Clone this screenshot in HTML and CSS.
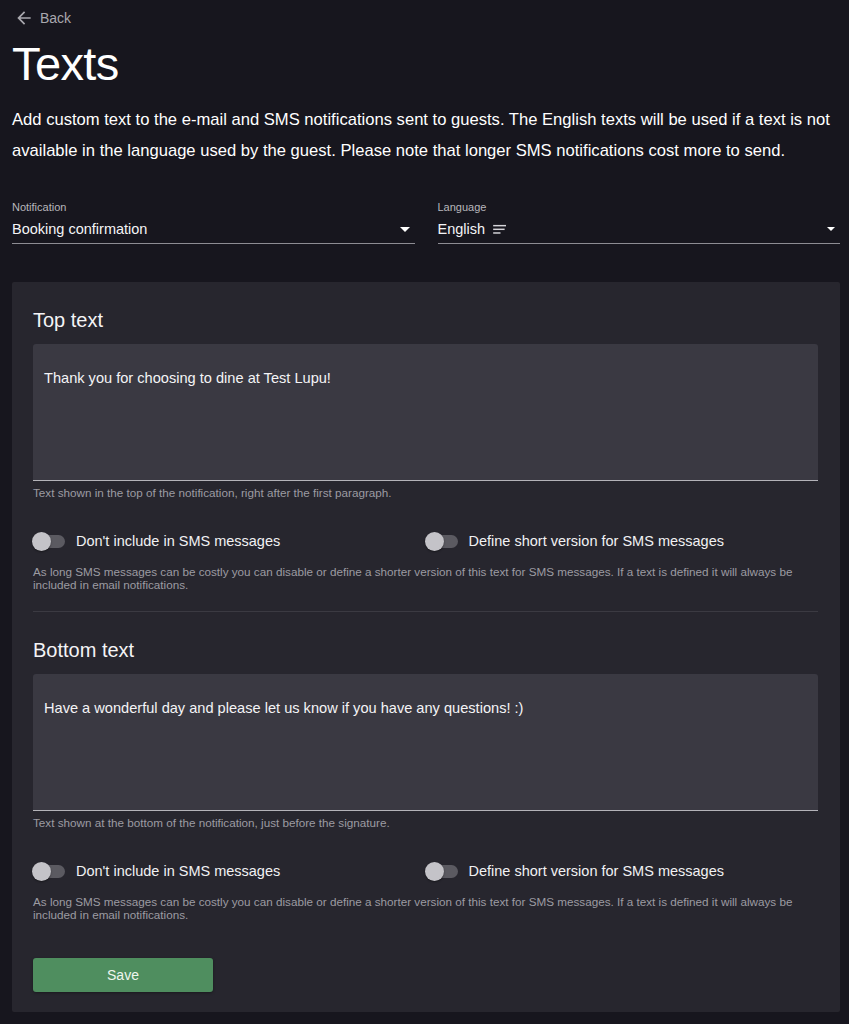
FILE: index.html
```html
<!DOCTYPE html>
<html lang="en">
<head>
<meta charset="utf-8">
<title>Texts</title>
<link rel="stylesheet" href="styles.css">
</head>
<body>
<div class="page">
  <a class="back" href="#">
    <svg class="back-icon" viewBox="0 0 24 24" width="20" height="20"><path d="M20 11H7.83l5.59-5.59L12 4l-8 8 8 8 1.41-1.41L7.83 13H20v-2z" fill="currentColor"/></svg>
    <span>Back</span>
  </a>
  <h1 class="title">Texts</h1>
  <p class="intro">Add custom text to the e-mail and SMS notifications sent to guests. The English texts will be used if a text is not available in the language used by the guest. Please note that longer SMS notifications cost more to send.</p>

  <div class="selects">
    <div class="select">
      <div class="select-label">Notification</div>
      <div class="select-field">
        <span class="select-value">Booking confirmation</span>
        <span class="caret"></span>
      </div>
    </div>
    <div class="select">
      <div class="select-label">Language</div>
      <div class="select-field">
        <span class="select-value">English
          <svg class="lines-icon" viewBox="0 0 16 12" width="15" height="11"><rect x="0" y="1" width="14" height="1.6" fill="currentColor"/><rect x="0" y="5" width="12.5" height="1.6" fill="currentColor"/><rect x="0" y="9" width="8" height="1.6" fill="currentColor"/></svg>
        </span>
        <span class="caret small"></span>
      </div>
    </div>
  </div>

  <div class="card">
    <section class="block">
      <h2 class="block-title">Top text</h2>
      <div class="textarea">Thank you for choosing to dine at Test Lupu!</div>
      <div class="helper">Text shown in the top of the notification, right after the first paragraph.</div>
      <div class="toggles">
        <label class="toggle"><span class="switch"><span class="thumb"></span></span><span>Don't include in SMS messages</span></label>
        <label class="toggle"><span class="switch"><span class="thumb"></span></span><span>Define short version for SMS messages</span></label>
      </div>
      <p class="desc">As long SMS messages can be costly you can disable or define a shorter version of this text for SMS messages. If a text is defined it will always be included in email notifications.</p>
    </section>
    <hr class="divider">
    <section class="block">
      <h2 class="block-title">Bottom text</h2>
      <div class="textarea">Have a wonderful day and please let us know if you have any questions! :)</div>
      <div class="helper">Text shown at the bottom of the notification, just before the signature.</div>
      <div class="toggles">
        <label class="toggle"><span class="switch"><span class="thumb"></span></span><span>Don't include in SMS messages</span></label>
        <label class="toggle"><span class="switch"><span class="thumb"></span></span><span>Define short version for SMS messages</span></label>
      </div>
      <p class="desc">As long SMS messages can be costly you can disable or define a shorter version of this text for SMS messages. If a text is defined it will always be included in email notifications.</p>
    </section>
    <button class="save" type="button">Save</button>
  </div>
</div>
</body>
</html>
```

FILE: styles.css
```css
* { box-sizing: border-box; }
html, body {
  margin: 0;
  padding: 0;
  background: #17161e;
  color: #ffffff;
  font-family: "Liberation Sans", Arial, sans-serif;
}
.page {
  width: 828px;
  margin-left: 12px;
  padding-top: 8px;
  padding-bottom: 12px;
}
.back {
  display: flex;
  align-items: center;
  gap: 6px;
  height: 20px;
  color: #a9a8ae;
  text-decoration: none;
  font-size: 14px;
  padding-left: 2px;
}
.back-icon { display: block; }
.title {
  margin: 8px 0 0 0;
  font-size: 47px;
  line-height: 56px;
  font-weight: 400;
  letter-spacing: -0.6px;
  color: #ffffff;
}
.intro {
  margin: 12px 0 0 0;
  font-size: 16.6px;
  line-height: 31px;
  color: #ffffff;
}
.selects {
  display: grid;
  grid-template-columns: 1fr 1fr;
  column-gap: 23px;
  margin-top: 34px;
}
.select-label {
  font-size: 11px;
  line-height: 14px;
  color: #b7b6bc;
}
.select-field {
  display: flex;
  align-items: center;
  justify-content: space-between;
  height: 25px;
  margin-top: 5px;
  padding-bottom: 4px;
  border-bottom: 1px solid #8d8c93;
}
.select-value {
  display: flex;
  align-items: center;
  gap: 8px;
  font-size: 14.5px;
  line-height: 20px;
  color: #f4f4f6;
}
.lines-icon { color: #d6d5da; margin-top: 1px; }
.caret {
  width: 0;
  height: 0;
  border-left: 5px solid transparent;
  border-right: 5px solid transparent;
  border-top: 5px solid #ffffff;
  margin-right: 5px;
}
.caret.small {
  border-left-width: 4px;
  border-right-width: 4px;
  border-top-width: 4px;
  margin-right: 5px;
}
.card {
  margin-top: 38px;
  background: #27262e;
  padding: 26px 22px 20px 21px;
  border-radius: 2px;
}
.block-title {
  margin: 0;
  font-size: 20px;
  line-height: 24px;
  font-weight: 400;
  color: #f4f4f6;
}
.textarea {
  margin-top: 12px;
  height: 137px;
  background: #3a3942;
  border-bottom: 1px solid #b4b3b9;
  border-radius: 3px 3px 0 0;
  padding: 24px 11px 8px 11px;
  font-size: 14.6px;
  line-height: 20px;
  color: #f4f4f6;
}
.helper {
  margin-top: 5px;
  font-size: 11.7px;
  line-height: 14px;
  color: #9c9ba2;
}
.toggles {
  display: grid;
  grid-template-columns: 1fr 1fr;
  margin-top: 29px;
}
.toggle {
  display: flex;
  align-items: center;
  gap: 11px;
  height: 24px;
  font-size: 14.5px;
  color: #f1f1f3;
}
.switch {
  position: relative;
  width: 32px;
  height: 13px;
  border-radius: 7px;
  background: #5b5a61;
  flex: none;
}
.thumb {
  position: absolute;
  left: -1px;
  top: -3px;
  width: 19px;
  height: 19px;
  border-radius: 50%;
  background: #c4c3c8;
  box-shadow: 0 1px 2px rgba(0,0,0,0.4);
}
.desc {
  margin: 12px 0 0 0;
  font-size: 11.7px;
  line-height: 13px;
  color: #9c9ba2;
}
.divider {
  margin: 20px 0 26px 0;
  border: 0;
  border-top: 1px solid #3b3a42;
}
.save {
  display: block;
  margin-top: 37px;
  width: 180px;
  height: 34px;
  border: 0;
  border-radius: 3px;
  background: #4f8e5f;
  color: #eef5ee;
  font-family: "Liberation Sans", Arial, sans-serif;
  font-size: 14px;
  box-shadow: 0 1px 3px rgba(0,0,0,0.35);
}
```
